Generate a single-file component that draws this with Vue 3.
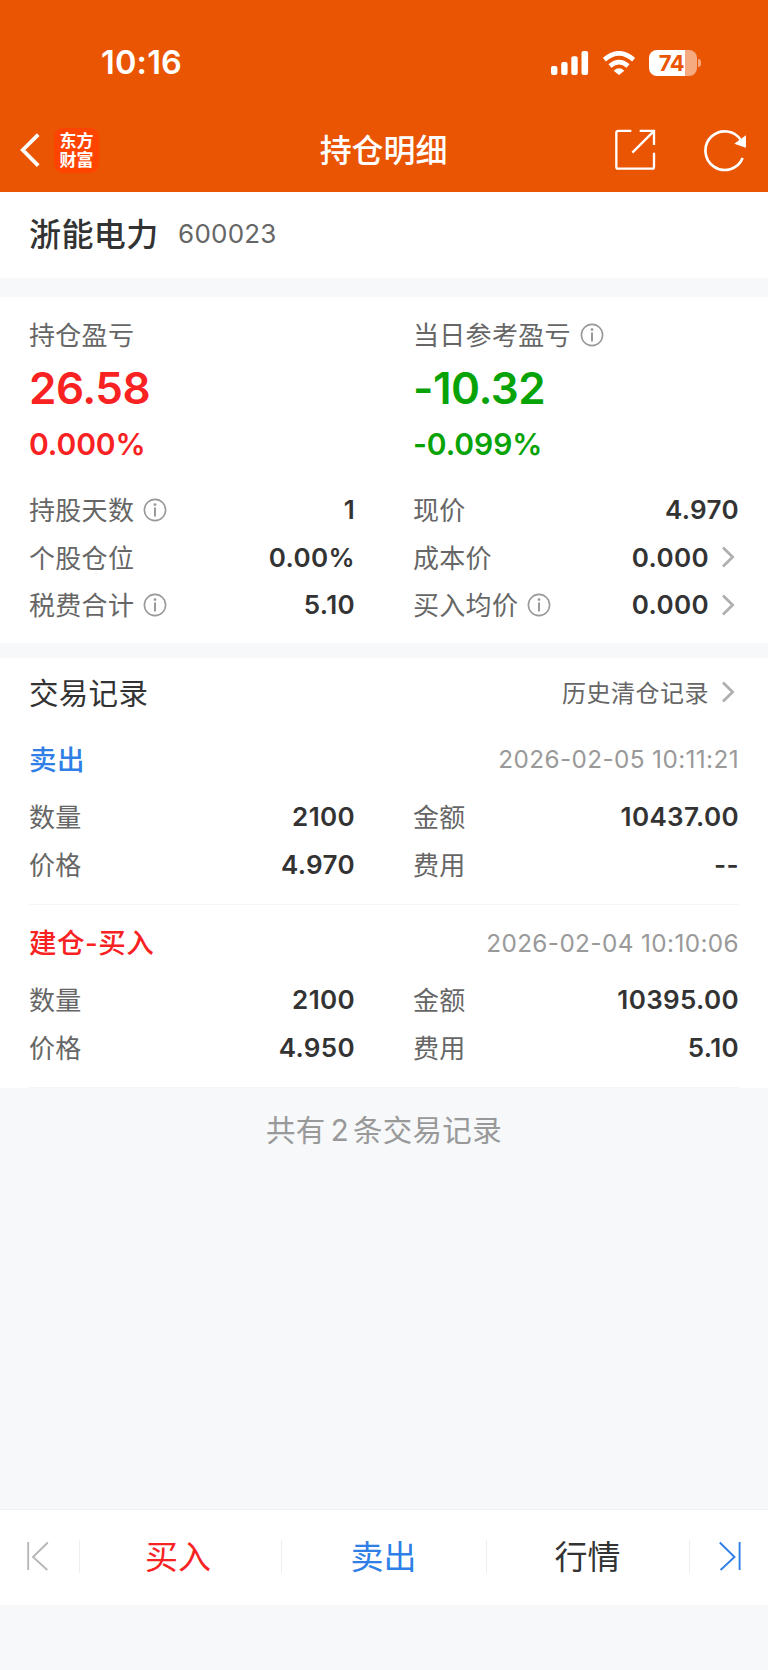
<script setup>
import { h } from 'vue'

const InfoIcon = () =>
  h('svg', { viewBox: '0 0 24 24', width: 24, height: 24, fill: 'none' }, [
    h('circle', { cx: 12, cy: 12, r: 10.6, stroke: '#999', 'stroke-width': 1.6 }),
    h('circle', { cx: 12, cy: 6.6, r: 1.4, fill: '#999' }),
    h('path', { d: 'M12 9.4V18.6', stroke: '#999', 'stroke-width': 2 })
  ])

const Chevron = () =>
  h('svg', { viewBox: '0 0 14 22', width: 14, height: 22, fill: 'none' }, [
    h('path', { d: 'M2 1.6L11.6 11L2 20.4', stroke: '#b0b0b0', 'stroke-width': 2.8 })
  ])

const summary = [
  { label: '持仓盈亏', value: '26.58', pct: '0.000%', tone: 'up' },
  { label: '当日参考盈亏', info: true, value: '-10.32', pct: '-0.099%', tone: 'down' }
]

const details = [
  { label: '持股天数', value: '1', info: true },
  { label: '现价', value: '4.970' },
  { label: '个股仓位', value: '0.00%' },
  { label: '成本价', value: '0.000', link: true },
  { label: '税费合计', value: '5.10', info: true },
  { label: '买入均价', value: '0.000', info: true, link: true }
]

const trades = [
  {
    type: '卖出', tone: 'sell', time: '2026-02-05 10:11:21',
    rows: [['数量', '2100'], ['金额', '10437.00'], ['价格', '4.970'], ['费用', '--']]
  },
  {
    type: '建仓-买入', tone: 'buy', time: '2026-02-04 10:10:06',
    rows: [['数量', '2100'], ['金额', '10395.00'], ['价格', '4.950'], ['费用', '5.10']]
  }
]
</script>

<template>
  <div class="screen">
    <header class="top">
      <div class="status">
        <span class="clock">10:16</span>
        <div class="indicators">
          <svg class="signal" width="38" height="24" viewBox="0 0 38 24" fill="#fff">
            <rect x="0" y="15" width="6.4" height="9" rx="2" />
            <rect x="10.2" y="11" width="6.4" height="13" rx="2" />
            <rect x="20.3" y="5.3" width="6.4" height="18.7" rx="2" />
            <rect x="30.5" y="0" width="6.6" height="24" rx="2" />
          </svg>
          <svg class="wifi" width="32" height="24" viewBox="654 60 96 72" fill="none" stroke="#fff" stroke-width="14">
            <path d="M658 86Q702 48 746 86" />
            <path d="M675 105Q702 82 729 105" />
            <path d="M686 119Q702 105 718 119L702 132Z" fill="#fff" stroke="none" />
          </svg>
          <div class="battery"><span>74</span></div>
          <i class="nub"></i>
        </div>
      </div>
      <nav class="nav">
        <div class="nav-left">
          <svg width="20" height="34" viewBox="0 0 20 34" fill="none" stroke="#fff" stroke-width="3.8">
            <path d="M18.2 1.6L2.8 17L18.2 32.6" />
          </svg>
          <div class="logo">东方<br />财富</div>
        </div>
        <h1>持仓明细</h1>
        <div class="nav-right">
          <svg width="42" height="42" viewBox="690 300 126 126" fill="none" stroke="#fff" stroke-width="7">
            <path d="M742 305.500H703Q697 305.500 697 311.500V413Q697 419 703 419H804Q810 419 810 413V371" />
            <path d="M767 305.500H810V348M808 308L745 371" />
          </svg>
          <svg width="43.300" height="43.300" viewBox="960 296 130 130" fill="none" stroke="#fff" stroke-width="8">
            <path d="M1076 383A58 58 0 1 1 1072 331" />
            <path d="M1086 315V352L1051 340Z" fill="#fff" stroke="none" />
          </svg>
        </div>
      </nav>
    </header>

    <section class="stock">
      <span class="stock-name">浙能电力</span>
      <span class="stock-code">600023</span>
    </section>

    <section class="position">
      <div class="grid">
        <div v-for="s in summary" :key="s.label" class="summary">
          <div class="label summary-label">{{ s.label }}<InfoIcon v-if="s.info" class="info" /></div>
          <div class="amount" :class="s.tone">{{ s.value }}</div>
          <div class="pct" :class="s.tone">{{ s.pct }}</div>
        </div>
      </div>
      <div class="grid details">
        <div v-for="d in details" :key="d.label" class="row">
          <span class="label">{{ d.label }}<InfoIcon v-if="d.info" class="info" /></span>
          <span class="value">{{ d.value }}<Chevron v-if="d.link" class="chev" /></span>
        </div>
      </div>
    </section>

    <section class="records">
      <div class="records-head">
        <h2>交易记录</h2>
        <span class="history">历史清仓记录<Chevron class="chev" /></span>
      </div>
      <article v-for="t in trades" :key="t.time" class="trade">
        <div class="trade-head">
          <span class="trade-type" :class="t.tone">{{ t.type }}</span>
          <time>{{ t.time }}</time>
        </div>
        <div class="grid">
          <div v-for="r in t.rows" :key="r[0]" class="row">
            <span class="label">{{ r[0] }}</span>
            <span class="value">{{ r[1] }}</span>
          </div>
        </div>
      </article>
    </section>

    <p class="total">共有<b>2</b>条交易记录</p>

    <footer class="bar">
      <div class="step">
        <svg width="22" height="30" viewBox="0 0 22 30" fill="none" stroke="#b5b5b5" stroke-width="1.800">
          <path d="M1.200 1V29M20.800 1.500L6 16L20.300 29" />
        </svg>
      </div>
      <div class="act buy">买入</div>
      <div class="act sell">卖出</div>
      <div class="act quote">行情</div>
      <div class="step last">
        <svg width="22" height="30" viewBox="0 0 22 30" fill="none" stroke="#2f7fe6" stroke-width="1.900">
          <path d="M20.600 1V29M.8 1.500L15.500 16L1.600 29" />
        </svg>
      </div>
    </footer>
  </div>
</template>

<style>
body { background: #f6f8fa; }
</style>

<style scoped>
.screen {
  width: 768px;
  height: 1670px;
  display: flex;
  flex-direction: column;
  background: #f6f8fa;
  color: #333;
  font-family: Inter, "Noto Sans CJK SC", sans-serif;
  overflow: hidden;
}
svg { display: block; flex: none; }
h1, h2, p { margin: 0; }

.top { height: 192px; flex: none; background: #ea5504; color: #fff; }
.status { height: 108px; padding: 17px 67.500px 0 101px; box-sizing: border-box; display: flex; justify-content: space-between; align-items: center; }
.clock { font-size: 32.500px; font-weight: 600; line-height: 40px; letter-spacing: 0.2px; padding-top: 1px; }
.indicators { display: flex; align-items: center; }
.wifi { margin-left: 14px; }
.battery { margin-left: 14px; width: 48px; height: 26px; border-radius: 8px; background: linear-gradient(90deg, #fff 36px, #f5aa80 36px); display: flex; align-items: center; justify-content: center; color: #ea5504; font-size: 22px; font-weight: 700; letter-spacing: -0.5px; }
.battery span { margin-right: 2px; line-height: 26px; }
.nub { width: 2.500px; height: 8px; margin-left: 1.500px; border-radius: 0 3px 3px 0; background: #f5aa80; }
.nav { height: 84px; padding: 0 21px 0 20px; display: grid; grid-template-columns: 1fr auto 1fr; align-items: center; }
.nav-left { display: flex; align-items: center; gap: 14px; }
.logo { width: 45px; height: 45px; padding-top: 2px; box-sizing: border-box; border-radius: 9px; background: #ff4400; text-align: center; font-family: "Noto Sans CJK SC", sans-serif; font-weight: 700; font-size: 17px; line-height: 19px; }
h1 { font-size: 32px; font-weight: 500; line-height: 40px; letter-spacing: -0.1px; padding-top: 2px; }
.nav-right { display: flex; justify-content: flex-end; align-items: center; gap: 48px; padding-top: 1px; }

.stock { height: 86px; flex: none; padding: 0 29px; display: flex; align-items: center; background: #fff; }
.stock-name { font-size: 32px; font-weight: 500; letter-spacing: 0.4px; line-height: 40px; }
.stock-code { margin-left: 19.500px; padding-bottom: 2px; font-size: 26px; color: #666; line-height: 40px; letter-spacing: 0.2px; }

.position { flex: none; margin-top: 19px; height: 346px; box-sizing: border-box; padding: 12px 29px 0 29px; background: #fff; }
.grid { display: grid; grid-template-columns: 326px 326px; column-gap: 58px; }
.label { display: flex; align-items: center; padding-bottom: 3px; box-sizing: border-box; font-size: 26px; letter-spacing: 0.3px; color: #666; white-space: nowrap; }
.info { margin-left: 9px; margin-top: 3px; }
.summary-label { height: 52px; }
.amount { height: 54px; line-height: 54px; font-size: 44px; font-weight: 600; letter-spacing: -0.5px; }
.pct { height: 58px; line-height: 59px; font-size: 30px; font-weight: 600; letter-spacing: -0.1px; }
.up { color: #f82222; }
.down { color: #08a308; }
.details { margin-top: 13px; }
.row { height: 47.700px; display: flex; align-items: center; justify-content: space-between; }
.value { display: flex; align-items: center; font-size: 26px; font-weight: 600; letter-spacing: 0.35px; padding-bottom: 1px; }
.chev { margin-left: 12px; margin-right: 4px; }

.records { flex: none; margin-top: 15px; height: 430px; background: #fff; padding: 0 29px; box-sizing: border-box; }
.records-head { height: 63px; padding-top: 3px; box-sizing: border-box; display: flex; align-items: center; justify-content: space-between; }
h2 { font-size: 29.500px; font-weight: 400; letter-spacing: 0.3px; }
.history { display: flex; align-items: center; font-size: 24px; letter-spacing: 0.5px; color: #666; }
.history .chev { margin-top: 2px; }
.trade { height: 183.500px; box-sizing: border-box; padding-top: 5px; border-bottom: 1px solid #f4f5f7; }
.trade-head { height: 67px; display: flex; align-items: center; justify-content: space-between; }
.trade-type { font-size: 27.500px; font-weight: 500; letter-spacing: 0.5px; padding-bottom: 4px; }
.buy { color: #f82222; }
.sell { color: #2f7fe6; }
time { font-size: 24.300px; color: #999; letter-spacing: 0.4px; padding-bottom: 1px; }

.total { flex: none; height: 84px; line-height: 84px; text-align: center; font-size: 29.500px; color: #999; letter-spacing: 0.3px; }
.total b { font-weight: 400; margin: 0 4px 0 5px; }

.bar { flex: none; margin-top: 337px; height: 96px; box-sizing: border-box; border-top: 1px solid #eff0f2; background: #fff; display: grid; grid-template-columns: 80px 202px 205px 203px 78px; align-items: center; }
.bar > div { height: 33px; margin-bottom: 3px; box-sizing: border-box; border-right: 1px solid #eee; display: flex; align-items: center; justify-content: center; }
.bar > .step { padding-left: 27px; justify-content: flex-start; }
.bar > .last { border-right: 0; padding-left: 29px; }
.act { font-size: 33px; padding: 0 1px 2px 0; }
.bar .buy { padding-right: 5px; }
</style>
